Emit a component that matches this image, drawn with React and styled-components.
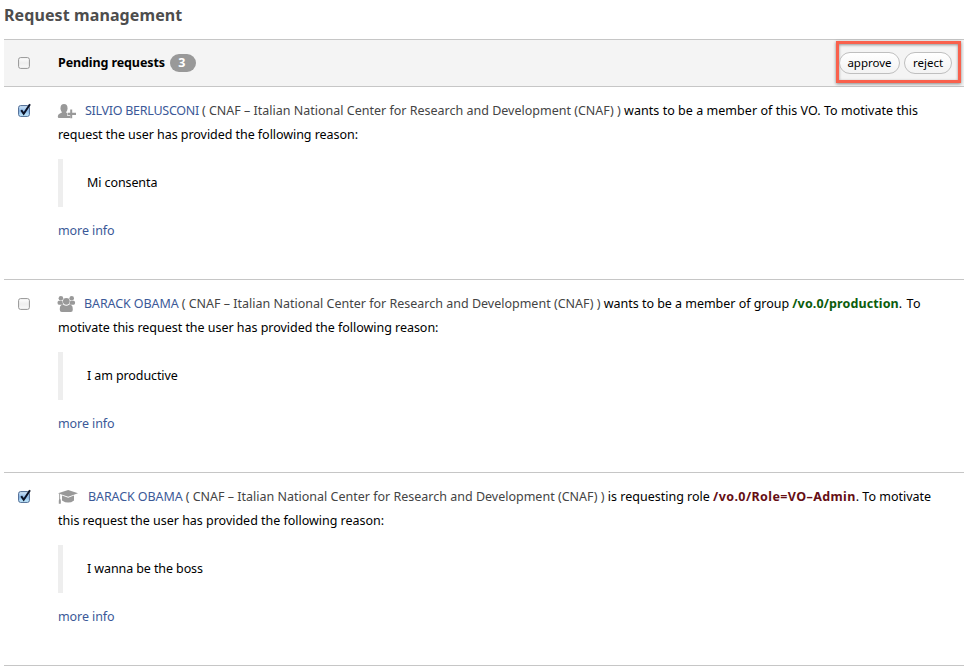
import React from "react";
import styled, { createGlobalStyle, css } from "styled-components";

const GlobalStyle = createGlobalStyle`
  * { box-sizing: border-box; }
  body {
    margin: 0;
    background: #fff;
    color: #000;
    font: 12.5px/24px "Noto Sans", "Open Sans", sans-serif;
    overflow: hidden;
  }
`;

const Page = styled.main`
  width: 960px;
  margin-left: 4px;
`;

const Title = styled.h1`
  margin: 0;
  height: 39px;
  padding-top: 3px;
  font-size: 16px;
  line-height: 24px;
  font-weight: 700;
  letter-spacing: 0.1px;
  color: #4d4d4d;
`;

const HeaderBar = styled.header`
  display: flex;
  align-items: center;
  height: 48px;
  padding-left: 14px;
  background: #f4f4f4;
  border-top: 1px solid #c6c6c6;
  border-bottom: 1px solid #c6c6c6;
`;

const CheckCell = styled.div`
  flex: none;
  width: 40px;
  height: 24px;
  padding-top: 6px;
`;

const HeaderLabel = styled.h2`
  margin: 0;
  font-size: 12.5px;
  line-height: 24px;
  font-weight: 700;
  letter-spacing: -0.1px;
`;

const Count = styled.span`
  width: 26px;
  height: 18px;
  margin-left: 5px;
  border-radius: 9px;
  background: #999;
  color: #fff;
  font-size: 12.5px;
  line-height: 17px;
  font-weight: 700;
  text-align: center;
  padding-right: 2px;
`;

const Actions = styled.div`
  display: flex;
  align-items: flex-start;
  gap: 4px;
  width: 125px;
  height: 42px;
  margin: -2px 3px 0 auto;
  padding-top: 8px;
  border: 3px solid #f9614d;
  box-shadow: 0 1px 3px rgba(0, 0, 0, 0.45), inset 0 1px 3px rgba(0, 0, 0, 0.4);
`;

const Button = styled.button`
  width: ${(p) => p.$width}px;
  height: 22px;
  padding: 0;
  border: 1px solid #bfbfbf;
  border-radius: 11px;
  background: linear-gradient(#fff, #f3f3f3);
  color: #000;
  font: 11.5px/18px "Noto Sans", "Open Sans", sans-serif;
`;

const Row = styled.article`
  display: flex;
  height: 193px;
  padding: 12px 0 0 14px;
  border-bottom: 1px solid #c6c6c6;
`;

const Body = styled.div`
  flex: 1;
  white-space: nowrap;
`;

const Line = styled.div`
  display: flex;
  height: 24px;
  white-space: pre;
`;

const tones = { text: "#000", muted: "#444", link: "#3b5998", group: "#0b5c0b", role: "#650e14" };

const Part = styled.span`
  color: ${(p) => tones[p.$tone || "text"]};
  letter-spacing: ${(p) => p.$track || 0}px;
  ${(p) => p.$bold && css`font-weight: 700;`}
`;

const IconSlot = styled.span`
  flex: none;
  width: ${(p) => p.$width}px;
  height: 24px;
  svg { display: block; }
`;

const Quote = styled.blockquote`
  height: 48px;
  margin: 12px 0;
  padding: 12px 0 12px 24px;
  border-left: 5px solid #eee;
`;

const MoreInfo = styled.a`
  color: ${tones.link};
  letter-spacing: -0.08px;
`;

function Checkbox({ checked }) {
  return (
    <svg width="14" height="14" viewBox="0 0 14 14" overflow="visible" display="block">
      <defs>
        <linearGradient id="off" x1="0" y1="0" x2="0" y2="1">
          <stop offset="0" stopColor="#fff" />
          <stop offset=".5" stopColor="#eee" />
          <stop offset="1" stopColor="#fafafa" />
        </linearGradient>
        <linearGradient id="on" x1="0" y1="0" x2="0" y2="1">
          <stop offset="0" stopColor="#d3e6f8" />
          <stop offset=".5" stopColor="#8fbdec" />
          <stop offset="1" stopColor="#c8efff" />
        </linearGradient>
      </defs>
      <rect x=".6" y=".6" width="10.8" height="10.8" rx="2" fill={checked ? "url(#on)" : "url(#off)"} stroke={checked ? "#4a6791" : "#949494"} />
      {checked && <path d="M3.2 5.2 5.7 8.7 12 -.8" fill="none" stroke="#0b1226" strokeWidth="2" />}
    </svg>
  );
}

const icons = {
  member: (
    <>
      <ellipse cx="6" cy="9.3" rx="3.5" ry="4.2" />
      <path d="M-.2 17.8C-.2 15.4.8 14.8 3.9 13.4V12h4.2v1.4l1 .5v2.9h3V19H1Q-.2 19-.2 17.8Z" />
      <path d="M12.2 10.4h2v3.4H18v2.1h-3.8v3.4h-2v-3.4H9.6v-2.1h2.6Z" />
    </>
  ),
  group: (
    <>
      <circle cx="2.9" cy="6.3" r="2.3" />
      <circle cx="13.7" cy="6.3" r="2.3" />
      <path d="M-.5 10.8C-.5 9.2.3 8.7 1.5 8.7h2.8l.9 4H.9Q-.5 12.6-.5 10.8Zm17.6 0c0-1.6-.8-2.1-2-2.1h-2.8l-.9 4h4.3q1.4-.1 1.4-1.9Z" />
      <circle cx="8.3" cy="9.3" r="3.4" />
      <path d="M1.8 17.8c0-3.6.6-4.9 3.6-5q2.9 2 5.8 0c3 .1 3.6 1.4 3.6 5q0 2.2-2 2.2h-9q-2 0-2-2.2Z" />
    </>
  ),
  role: (
    <>
      <path d="M0 8.2 10.2 5 20 8.2l-9.8 3.6Z" />
      <path d="M4 10.6 10.2 12.8l5.8-2.2v4.8q-2.8 2.2-5.8 2.2t-6.2-2.2Z" />
      <path d="M1.2 8.6h.9v5q1 1 .7 5.2H.8q-.2-3.6.4-5Z" />
    </>
  ),
};

const organisation = "( CNAF – Italian National Center for Research and Development (CNAF) ) ";

const requests = [
  {
    icon: "member", iconWidth: 27, checked: true, name: "SILVIO BERLUSCONI ", nameTrack: -0.27,
    first: [{ text: "wants to be a member of this VO. To motivate this", track: 0.04 }],
    second: "request the user has provided the following reason:", secondTrack: -0.05,
    reason: "Mi consenta",
  },
  {
    icon: "group", iconWidth: 26, checked: false, name: "BARACK OBAMA ", nameTrack: -0.1,
    first: [
      { text: "wants to be a member of group ", track: -0.03 },
      { text: "/vo.0/production", tone: "group", bold: true, track: 0.12 },
      { text: ". To", track: 0.5 },
    ],
    second: "motivate this request the user has provided the following reason:", secondTrack: -0.03,
    reason: "I am productive",
  },
  {
    icon: "role", iconWidth: 30, checked: true, name: "BARACK OBAMA ", nameTrack: -0.1,
    first: [
      { text: "is requesting role " },
      { text: "/vo.0/Role=VO–Admin", tone: "role", bold: true, track: 0.4 },
      { text: ". To motivate" },
    ],
    second: "this request the user has provided the following reason:", secondTrack: -0.02,
    reason: "I wanna be the boss",
  },
];

function Request({ data }) {
  return (
    <Row>
      <CheckCell><Checkbox checked={data.checked} /></CheckCell>
      <Body>
        <Line>
          <IconSlot $width={data.iconWidth}>
            <svg width="20" height="24" viewBox="0 0 20 24" fill="#999" overflow="visible">{icons[data.icon]}</svg>
          </IconSlot>
          <Part $tone="link" $track={data.nameTrack}>{data.name}</Part>
          <Part $tone="muted">{organisation}</Part>
          {data.first.map((p) => (
            <Part key={p.text} $tone={p.tone} $bold={p.bold} $track={p.track}>{p.text}</Part>
          ))}
        </Line>
        <Line><Part $track={data.secondTrack}>{data.second}</Part></Line>
        <Quote><Part $track={-0.1}>{data.reason}</Part></Quote>
        <MoreInfo>more info</MoreInfo>
      </Body>
    </Row>
  );
}

export default function App() {
  return (
    <>
      <GlobalStyle />
      <Page>
        <Title>Request management</Title>
        <HeaderBar>
          <CheckCell><Checkbox /></CheckCell>
          <HeaderLabel>Pending requests</HeaderLabel>
          <Count>3</Count>
          <Actions>
            <Button $width={61}>approve</Button>
            <Button $width={48}>reject</Button>
          </Actions>
        </HeaderBar>
        {requests.map((r) => <Request key={r.reason} data={r} />)}
      </Page>
    </>
  );
}
